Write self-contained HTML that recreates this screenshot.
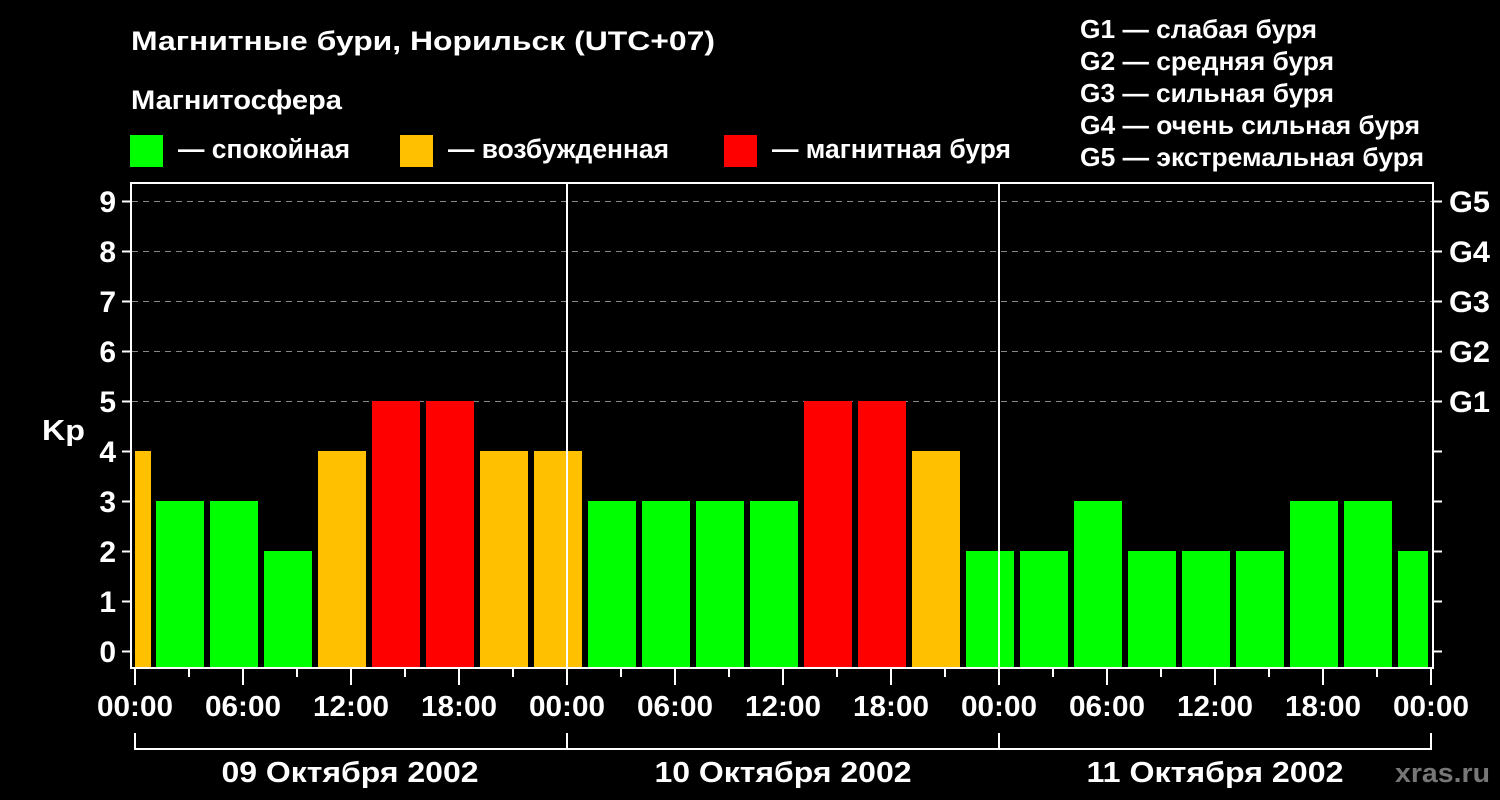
<!DOCTYPE html>
<html><head><meta charset="utf-8"><style>
html,body{margin:0;padding:0;background:#000;}
svg{display:block}
text{font-family:"Liberation Sans",sans-serif;font-weight:bold;fill:#fff}
</style></head><body>
<svg width="1500" height="800" viewBox="0 0 1500 800" xmlns="http://www.w3.org/2000/svg">
<rect width="1500" height="800" fill="#000"/>
<g font-size="27">
<text x="131" y="50" textLength="584" lengthAdjust="spacingAndGlyphs">Магнитные бури, Норильск (UTC+07)</text>
<text x="131" y="109" textLength="211" lengthAdjust="spacingAndGlyphs">Магнитосфера</text>
<text x="178" y="158" textLength="172" lengthAdjust="spacingAndGlyphs">— спокойная</text>
<text x="448" y="158" textLength="221" lengthAdjust="spacingAndGlyphs">— возбужденная</text>
<text x="772" y="158" textLength="239" lengthAdjust="spacingAndGlyphs">— магнитная буря</text>
</g>
<rect x="130" y="135" width="33" height="32" fill="#00ff00"/>
<rect x="400" y="135" width="33" height="32" fill="#ffc000"/>
<rect x="724" y="135" width="33" height="32" fill="#ff0000"/>
<g font-size="26">
<text x="1080" y="38" textLength="237" lengthAdjust="spacingAndGlyphs">G1 — слабая буря</text>
<text x="1080" y="70" textLength="254" lengthAdjust="spacingAndGlyphs">G2 — средняя буря</text>
<text x="1080" y="102" textLength="254" lengthAdjust="spacingAndGlyphs">G3 — сильная буря</text>
<text x="1080" y="134" textLength="340" lengthAdjust="spacingAndGlyphs">G4 — очень сильная буря</text>
<text x="1080" y="166" textLength="344" lengthAdjust="spacingAndGlyphs">G5 — экстремальная буря</text>
</g>
<g stroke="#888" stroke-width="1" stroke-dasharray="6,5">
<line x1="132" x2="1432" y1="201.5" y2="201.5"/>
<line x1="132" x2="1432" y1="251.5" y2="251.5"/>
<line x1="132" x2="1432" y1="301.5" y2="301.5"/>
<line x1="132" x2="1432" y1="351.5" y2="351.5"/>
<line x1="132" x2="1432" y1="401.5" y2="401.5"/>
</g>
<g>
<rect x="135" y="451" width="16" height="217" fill="#ffc000"/>
<rect x="156" y="501" width="48" height="167" fill="#00ff00"/>
<rect x="210" y="501" width="48" height="167" fill="#00ff00"/>
<rect x="264" y="551" width="48" height="117" fill="#00ff00"/>
<rect x="318" y="451" width="48" height="217" fill="#ffc000"/>
<rect x="372" y="401" width="48" height="267" fill="#ff0000"/>
<rect x="426" y="401" width="48" height="267" fill="#ff0000"/>
<rect x="480" y="451" width="48" height="217" fill="#ffc000"/>
<rect x="534" y="451" width="48" height="217" fill="#ffc000"/>
<rect x="588" y="501" width="48" height="167" fill="#00ff00"/>
<rect x="642" y="501" width="48" height="167" fill="#00ff00"/>
<rect x="696" y="501" width="48" height="167" fill="#00ff00"/>
<rect x="750" y="501" width="48" height="167" fill="#00ff00"/>
<rect x="804" y="401" width="48" height="267" fill="#ff0000"/>
<rect x="858" y="401" width="48" height="267" fill="#ff0000"/>
<rect x="912" y="451" width="48" height="217" fill="#ffc000"/>
<rect x="966" y="551" width="48" height="117" fill="#00ff00"/>
<rect x="1020" y="551" width="48" height="117" fill="#00ff00"/>
<rect x="1074" y="501" width="48" height="167" fill="#00ff00"/>
<rect x="1128" y="551" width="48" height="117" fill="#00ff00"/>
<rect x="1182" y="551" width="48" height="117" fill="#00ff00"/>
<rect x="1236" y="551" width="48" height="117" fill="#00ff00"/>
<rect x="1290" y="501" width="48" height="167" fill="#00ff00"/>
<rect x="1344" y="501" width="48" height="167" fill="#00ff00"/>
<rect x="1398" y="551" width="30" height="117" fill="#00ff00"/>
</g>
<line x1="567" x2="567" y1="183" y2="668" stroke="#fff" stroke-width="2"/>
<line x1="999" x2="999" y1="183" y2="668" stroke="#fff" stroke-width="2"/>
<rect x="131" y="183" width="1302" height="485" fill="none" stroke="#fff" stroke-width="2"/>
<g stroke="#fff" stroke-width="2">
<path d="M122 201.5h9M122 251.5h9M122 301.5h9M122 351.5h9M122 401.5h9M122 451.5h9M122 501.5h9M122 551.5h9M122 601.5h9M122 651.5h9"/>
<path d="M1433 201.5h9M1433 251.5h9M1433 301.5h9M1433 351.5h9M1433 401.5h9M1433 451.5h9M1433 501.5h9M1433 551.5h9M1433 601.5h9M1433 651.5h9"/>
<path d="M135 669v16M189 669v8M243 669v16M297 669v8M351 669v16M405 669v8M459 669v16M513 669v8M567 669v16M621 669v8M675 669v16M729 669v8M783 669v16M837 669v8M891 669v16M945 669v8M999 669v16M1053 669v8M1107 669v16M1161 669v8M1215 669v16M1269 669v8M1323 669v16M1377 669v8M1431 669v16"/>
<path d="M135 733v16M567 733v16M999 733v16M1431 733v16M134 749H1432"/>
</g>
<g font-size="30" text-anchor="end">
<text x="116" y="212">9</text><text x="116" y="262">8</text><text x="116" y="312">7</text>
<text x="116" y="362">6</text><text x="116" y="412">5</text><text x="116" y="462">4</text>
<text x="116" y="512">3</text><text x="116" y="562">2</text><text x="116" y="612">1</text>
<text x="116" y="662">0</text>
</g>
<text x="42" y="440" font-size="29" textLength="43" lengthAdjust="spacingAndGlyphs">Kp</text>
<g font-size="30">
<text x="1449" y="212" textLength="41" lengthAdjust="spacingAndGlyphs">G5</text>
<text x="1449" y="262" textLength="41" lengthAdjust="spacingAndGlyphs">G4</text>
<text x="1449" y="312" textLength="41" lengthAdjust="spacingAndGlyphs">G3</text>
<text x="1449" y="362" textLength="41" lengthAdjust="spacingAndGlyphs">G2</text>
<text x="1449" y="412" textLength="41" lengthAdjust="spacingAndGlyphs">G1</text>
</g>
<g font-size="29" text-anchor="middle">
<text x="135" y="716" textLength="76" lengthAdjust="spacingAndGlyphs">00:00</text>
<text x="243" y="716" textLength="76" lengthAdjust="spacingAndGlyphs">06:00</text>
<text x="351" y="716" textLength="76" lengthAdjust="spacingAndGlyphs">12:00</text>
<text x="459" y="716" textLength="76" lengthAdjust="spacingAndGlyphs">18:00</text>
<text x="567" y="716" textLength="76" lengthAdjust="spacingAndGlyphs">00:00</text>
<text x="675" y="716" textLength="76" lengthAdjust="spacingAndGlyphs">06:00</text>
<text x="783" y="716" textLength="76" lengthAdjust="spacingAndGlyphs">12:00</text>
<text x="891" y="716" textLength="76" lengthAdjust="spacingAndGlyphs">18:00</text>
<text x="999" y="716" textLength="76" lengthAdjust="spacingAndGlyphs">00:00</text>
<text x="1107" y="716" textLength="76" lengthAdjust="spacingAndGlyphs">06:00</text>
<text x="1215" y="716" textLength="76" lengthAdjust="spacingAndGlyphs">12:00</text>
<text x="1323" y="716" textLength="76" lengthAdjust="spacingAndGlyphs">18:00</text>
<text x="1431" y="716" textLength="76" lengthAdjust="spacingAndGlyphs">00:00</text>
<text x="350" y="782" textLength="257" lengthAdjust="spacingAndGlyphs">09 Октября 2002</text>
<text x="783" y="782" textLength="257" lengthAdjust="spacingAndGlyphs">10 Октября 2002</text>
<text x="1215" y="782" textLength="257" lengthAdjust="spacingAndGlyphs">11 Октября 2002</text>
</g>
<text x="1490" y="782" font-size="27" text-anchor="end" style="fill:#777" textLength="95" lengthAdjust="spacingAndGlyphs">xras.ru</text>
</svg>
</body></html>
